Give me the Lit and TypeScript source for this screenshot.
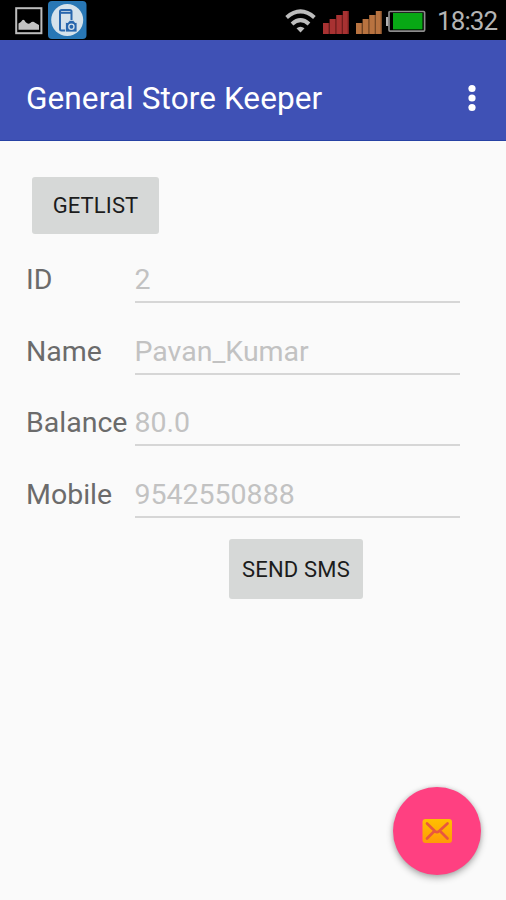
import { LitElement, html, css } from "lit";
import { customElement } from "lit/decorators.js";

@customElement("status-bar")
class StatusBar extends LitElement {
  static styles = css`
    :host { display: flex; align-items: flex-start; height: 40px; background: #000; color: #b4b4b4; }
    svg { display: block; flex: none; }
    .photo { margin: 7px 0 0 15px; }
    .app { margin: 1px 0 0 5px; }
    .wifi { margin: 9px 0 0 auto; }
    .signal { margin: 10px 0 0 7px; }
    .battery { margin: 10px 0 0 4px; }
    .time { width: 60px; margin: 6px 9px 0 11px; font-size: 26px; line-height: 31px; letter-spacing: -0.9px; white-space: nowrap; }
  `;
  signal(fill: string, edge: string) {
    return html`<svg class="signal" width="26" height="24" viewBox="0 0 26 24">
      <path d="M0 13H6V24H0ZM6.6 9H12.6V24H6.6ZM13.2 5H19.2V24H13.2ZM19.8 1H25.5V24H19.8Z" fill=${fill}></path>
      <path d="M6 13V24M12.6 9V24M19.2 5V24M25.2 1V24" stroke=${edge} stroke-width="1.2"></path>
    </svg>`;
  }
  render() {
    return html`
      <svg class="photo" width="28" height="28" viewBox="0 0 28 28">
        <rect x="1.2" y="1.2" width="25.2" height="25" fill="none" stroke="#bdbdbd" stroke-width="2"></rect>
        <path d="M3.5 22.8V16.5Q6 15.5 7.5 13Q9 12 10.5 15Q13 17.5 15 16.2Q18 13.5 20 15.8L24 18V22.8Z" fill="#c2c2c2"></path>
      </svg>
      <svg class="app" width="39" height="38" viewBox="0 0 39 38">
        <rect width="38.5" height="38" rx="4" fill="#2877b5"></rect>
        <circle cx="19.2" cy="19" r="16" fill="#d5e2eb"></circle>
        <rect x="12" y="9" width="11.5" height="20.5" rx="1.5" fill="#d5e2eb" stroke="#2866ad" stroke-width="2"></rect>
        <path d="M12 11.8H23.5" stroke="#2866ad" stroke-width="2"></path>
        <path d="M17.5 21.5h2.5l1.5-2h4l1.5 2h2v9.5H17.5Z" fill="#2866ad" stroke="#d5e2eb" stroke-width=".8"></path>
        <circle cx="23.4" cy="25.8" r="2.6" fill="none" stroke="#d5e2eb" stroke-width="1.3"></circle>
      </svg>
      <svg class="wifi" width="31" height="24" viewBox="0 0 31 24">
        <g fill="none" stroke="#bdbdbd" stroke-width="4">
          <path d="M1.6 8.4Q15.5-3.6 29.4 8.4"></path>
          <path d="M7 15Q15.5 7.4 24 15"></path>
        </g>
        <path d="M11.5 19.3Q15.5 16 19.5 19.3L15.5 23.6Z" fill="#bdbdbd"></path>
      </svg>
      ${this.signal("#a83232", "#7c2020")}
      ${this.signal("#b87340", "#84502a")}
      <svg class="battery" width="40" height="23" viewBox="0 0 40 23">
        <rect x="0" y="7" width="2.5" height="9" fill="#b0b0b0"></rect>
        <rect x="3" y="1.5" width="35.6" height="19.6" rx="1" fill="#000" stroke="#8c8c8c" stroke-width="1.7"></rect>
        <rect x="7" y="3" width="29.5" height="16.4" fill="#08a815"></rect>
      </svg>
      <div class="time">18:32</div>`;
  }
}

@customElement("app-root")
class AppRoot extends LitElement {
  static styles = css`
    :host { display: block; position: relative; box-sizing: border-box; height: 900px; overflow: hidden;
      background: #fafafa; font-family: Roboto, sans-serif; }
    .bar { display: flex; align-items: center; justify-content: space-between; box-sizing: border-box; height: 101px;
      padding: 16px 28px 0 26px; background: #3f51b5; border-bottom: 1px solid #2742a4; color: #fff; }
    .title { font-size: 31.5px; line-height: 40px; letter-spacing: 0.1px; padding-top: 1px; white-space: nowrap; }
    .content { padding: 36px 26px 0; }
    .btn { display: flex; align-items: center; justify-content: center; border: 0; padding: 0; border-radius: 3px;
      background: #d6d8d7; color: #1c1c1c; font: 22px Roboto, sans-serif; white-space: nowrap; }
    .get { width: 127px; height: 57px; margin-left: 6px; letter-spacing: 0.1px; }
    .send { width: 134px; height: 60px; margin: 21px 0 0 203px; padding-top: 1px; letter-spacing: 0.2px; }
    .rows { padding-top: 20px; }
    .row { display: flex; height: 49px; margin-bottom: 22.7px; font-size: 28.5px; line-height: 52px; white-space: nowrap; }
    .row:last-child { margin-bottom: 0; }
    .label { width: 108.5px; color: #6b6b6b; }
    .field { box-sizing: border-box; width: 325px; height: 49px; border-bottom: 2px solid #d6d6d6; color: #c2c2c2; }
    .fab { position: absolute; left: 393px; top: 787px; width: 88px; height: 88px; border-radius: 50%; background: #ff4081;
      display: flex; align-items: center; justify-content: center; box-shadow: 0 3px 7px rgba(0,0,0,.3), 0 0 4px rgba(0,0,0,.12); }
  `;
  rows = [["ID", "2"], ["Name", "Pavan_Kumar"], ["Balance", "80.0"], ["Mobile", "9542550888"]];
  render() {
    return html`
      <status-bar></status-bar>
      <header class="bar">
        <div class="title">General Store Keeper</div>
        <svg width="12" height="28" viewBox="0 0 12 28" fill="#fff">
          <circle cx="6" cy="4.5" r="3.6"></circle><circle cx="6" cy="14" r="3.6"></circle><circle cx="6" cy="23.5" r="3.6"></circle>
        </svg>
      </header>
      <main class="content">
        <button class="btn get">GETLIST</button>
        <div class="rows">
          ${this.rows.map(([label, value]) => html`<div class="row"><div class="label">${label}</div><div class="field">${value}</div></div>`)}
        </div>
        <button class="btn send">SEND SMS</button>
      </main>
      <div class="fab">
        <svg width="32" height="26" viewBox="0 0 32 26">
          <defs><linearGradient id="g" x1="0" y1="0" x2="0" y2="1"><stop stop-color="#ffc000"></stop><stop offset="1" stop-color="#ff9b08"></stop></linearGradient></defs>
          <rect x="1.5" y="1" width="29.5" height="24" rx="3" fill="url(#g)"></rect>
          <path d="M6 5.5L14 13.2Q16 15 18 13.2L26.5 5.5M6 20.5L12.5 14M26.5 20.5L20 14" fill="none" stroke="#e8573f" stroke-width="2.7" stroke-linecap="round"></path>
        </svg>
      </div>`;
  }
}
